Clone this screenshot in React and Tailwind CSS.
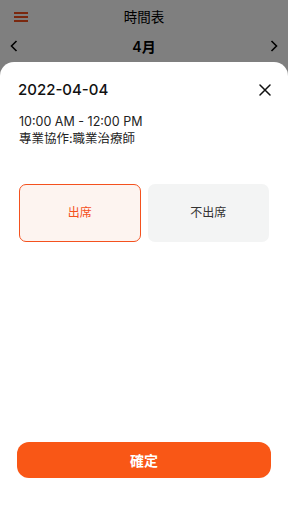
export default function App() {
  const font = {
    fontFamily: '"Inter", "Noto Sans CJK TC", sans-serif',
  };
  return (
    <div className="relative h-[512px] w-[288px] overflow-hidden bg-white text-black" style={font}>
      {/* underlying page */}
      <div className="flex h-[34px] items-center px-[14px]">
        <div className="flex w-[14px] flex-col gap-[2.5px]">
          <span className="block h-[1.5px] w-[14px] bg-[#f4511e]" />
          <span className="block h-[1.5px] w-[14px] bg-[#f4511e]" />
          <span className="block h-[1.5px] w-[14px] bg-[#f4511e]" />
        </div>
        <div className="flex-1 pr-[14px] text-center text-[13.5px]">時間表</div>
      </div>
      <div className="flex h-[24px] items-center justify-between px-[10px]">
        <svg width="8" height="12" viewBox="0 0 8 12" fill="none" stroke="#000" strokeWidth="1.6">
          <path d="M6.5 1 L1.5 6 L6.5 11" />
        </svg>
        <div className="text-[14px] font-semibold">4月</div>
        <svg width="8" height="12" viewBox="0 0 8 12" fill="none" stroke="#000" strokeWidth="1.6">
          <path d="M1.5 1 L6.5 6 L1.5 11" />
        </svg>
      </div>

      {/* dim overlay */}
      <div className="absolute inset-0 bg-black/50" />

      {/* bottom sheet */}
      <div className="absolute bottom-0 left-0 right-0 top-[62px] flex flex-col rounded-t-[14px] bg-white">
        <div className="flex items-center justify-between pl-[18px] pr-[17px] pt-[18px]">
          <div className="text-[15px] font-medium leading-[20px] text-[#111]">2022-04-04</div>
          <svg width="12" height="12" viewBox="0 0 12 12" stroke="#111" strokeWidth="1.5" strokeLinecap="round">
            <path d="M1 1 L11 11 M11 1 L1 11" />
          </svg>
        </div>
        <div className="mt-[13px] px-[19px] text-[12.5px] leading-[17px] text-[#222]">
          <div>10:00 AM - 12:00 PM</div>
          <div>專業協作:職業治療師</div>
        </div>
        <div className="mt-[37px] grid grid-cols-2 gap-[7px] px-[19px]">
          <button className="flex h-[58px] items-center justify-center rounded-[7px] border-[1.5px] border-[#f4511e] bg-[#fdf4f0] text-[12px] text-[#f4511e]">
            出席
          </button>
          <button className="flex h-[58px] items-center justify-center rounded-[7px] bg-[#f3f4f4] text-[12px] text-[#333]">
            不出席
          </button>
        </div>
        <div className="flex-1" />
        <div className="px-[17px] pb-[34px]">
          <button className="flex h-[36px] w-full items-center justify-center rounded-[12px] bg-[#f95716] text-[14px] font-bold text-white">
            確定
          </button>
        </div>
      </div>
    </div>
  );
}
